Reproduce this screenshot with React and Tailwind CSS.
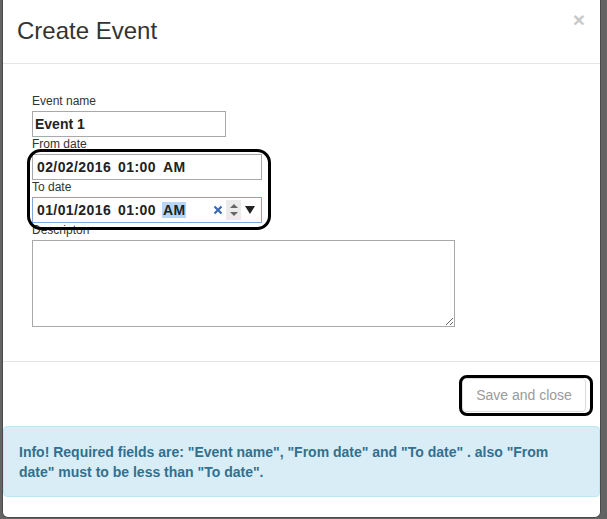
import React from 'react';

function DateField({ date, time, ampm, focused }) {
    return (
        <div
            className={
                'relative flex items-center h-[26px] w-[230px] pl-[4px] border bg-white text-[14px] font-bold text-[#222] tracking-[0.4px] ' +
                (focused ? 'border-[#7fa6df]' : 'border-[#a9a9a9]')
            }
        >
            <span>{date}</span>
            <span className="ml-[7px]">{time}</span>
            {focused ? (
                <span className="ml-[6px] px-[1px] leading-[16px] bg-[#b5d5fb]">{ampm}</span>
            ) : (
                <span className="ml-[7px]">{ampm}</span>
            )}
            {focused && (
                <div className="absolute right-[6px] top-[2px] flex items-center h-[20px]">
                    <svg width="10" height="10" viewBox="0 0 10 10" className="mr-[3px]">
                        <path d="M1.5 1.5 L8.5 8.5 M8.5 1.5 L1.5 8.5" stroke="#3a6bb4" strokeWidth="2.2" />
                    </svg>
                    <div className="flex flex-col items-center justify-center gap-[4px] w-[15px] h-[20px] bg-[#ebebeb]">
                        <svg width="8" height="4" viewBox="0 0 8 4">
                            <path d="M0 4 L4 0 L8 4 Z" fill="#666" />
                        </svg>
                        <svg width="8" height="4" viewBox="0 0 8 4">
                            <path d="M0 0 L4 4 L8 0 Z" fill="#666" />
                        </svg>
                    </div>
                    <svg width="10" height="8" viewBox="0 0 10 8" className="ml-[4px]">
                        <path d="M0 0 L10 0 L5 8 Z" fill="#222" />
                    </svg>
                </div>
            )}
        </div>
    );
}

function Label({ children }) {
    return <div className="text-[12px] leading-[15px] mb-[2px] text-[#333]">{children}</div>;
}

export default function App() {
    return (
        <div className="relative w-[607px] h-[519px] overflow-hidden bg-[#646464] font-['Liberation_Sans',Arial,sans-serif]">
            <div className="relative ml-[2px] w-[599px] h-[518px] bg-white border border-t-0 border-[#4b4b4b] rounded-b-[6px] overflow-hidden">
                {/* header */}
                <div className="h-[64px] border-b border-[#e5e5e5] pl-[14px] pt-[18px]">
                    <h3 className="text-[24px] leading-[26px] text-[#333]">Create Event</h3>
                </div>
                <span className="absolute top-[9px] right-[15px] text-[21px] leading-[21px] font-bold text-[#c9c9c9]">×</span>

                {/* body */}
                <div className="h-[297px] pl-[29px] pt-[30px]">
                    <Label>Event name</Label>
                    <div className="flex items-center h-[26px] w-[194px] pl-[2px] border border-[#a9a9a9] text-[14px] font-bold text-[#222]">
                        Event 1
                    </div>
                    <Label>From date</Label>
                    <DateField date="02/02/2016" time="01:00" ampm="AM" />
                    <Label>To date</Label>
                    <DateField date="01/01/2016" time="01:00" ampm="AM" focused />
                    <Label>Descripton</Label>
                    <textarea className="block w-[423px] h-[87px] border border-[#a9a9a9] resize" readOnly />
                </div>

                {/* footer */}
                <div className="flex justify-end border-t border-[#e5e5e5] pt-[16px] pb-[14px] pr-[14px]">
                    <button className="w-[124px] h-[34px] border border-[#dcdcdc] rounded-[4px] bg-white text-[14px] text-[#9a9a9a]">
                        Save and close
                    </button>
                </div>

                <div className="border border-[#bce8f1] bg-[#d9edf7] rounded-[4px] pl-[15px] pr-[14px] pt-[15px] pb-[14px] text-[14px] leading-[20px] font-bold text-[#31708f]">
                    Info! Required fields are: "Event name", "From date" and "To date" . also "From date" must to be less than "To date".
                </div>
            </div>

            {/* hand-drawn highlight marks */}
            <div className="absolute left-[27px] top-[149px] w-[244px] h-[81px] border-[3px] border-black rounded-[14px]" />
            <div className="absolute left-[459px] top-[375px] w-[134px] h-[41px] border-[3px] border-black rounded-[8px]" />
        </div>
    );
}
